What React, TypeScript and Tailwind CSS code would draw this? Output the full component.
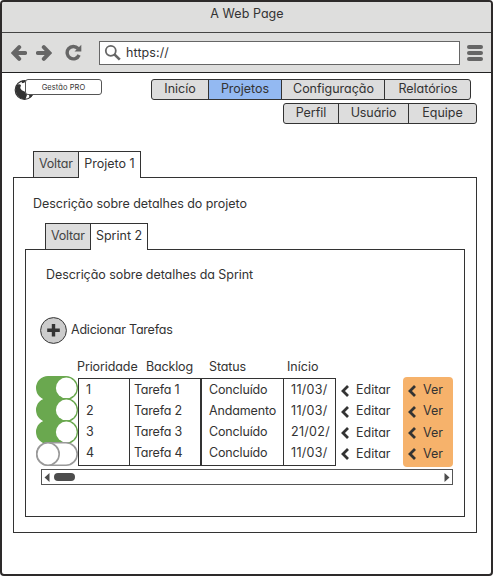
import React from 'react';

const tasks = [
  { id: 1, name: 'Tarefa 1', status: 'Concluído', start: '11/03/', on: true },
  { id: 2, name: 'Tarefa 2', status: 'Andamento', start: '11/03/', on: true },
  { id: 3, name: 'Tarefa 3', status: 'Concluído', start: '21/02/', on: true },
  { id: 4, name: 'Tarefa 4', status: 'Concluído', start: '11/03/', on: false },
];

function Arrow({ flip = false }: { flip?: boolean }) {
  return (
    <svg width="16" height="16" viewBox="0 0 16 16" className={flip ? 'rotate-180' : ''}>
      <path d="M8.2 2.2 2.6 8l5.6 5.8M3.5 8h10.6" fill="none" stroke="#666" strokeWidth="4" strokeLinecap="round" />
    </svg>
  );
}

function Chevron() {
  return (
    <svg width="8" height="12" viewBox="0 0 8 12" className="shrink-0">
      <path d="M7 1 2 6l5 5" fill="none" stroke="#333" strokeWidth="2.8" />
    </svg>
  );
}

function Toggle({ on }: { on: boolean }) {
  return (
    <svg width="42" height="24" viewBox="0 0 42 24" className="-mb-0.5 shrink-0">
      <rect x=".8" y=".8" width="40.4" height="22.4" rx="11.2" fill={on ? '#6aa84f' : '#fff'} stroke={on ? '#6aa84f' : '#999'} strokeWidth="1.6" />
      {on ? (
        <circle cx="30.3" cy="12" r="10.4" fill="#fff" />
      ) : (
        <circle cx="12" cy="12" r="11.2" fill="#fff" stroke="#999" strokeWidth="1.6" />
      )}
    </svg>
  );
}

function Tabs({ active, width }: { active: string; width: string }) {
  return (
    <div className="relative -mb-px flex h-[27px] leading-[24px]">
      <div className="w-[46px] border border-[#333] bg-[#ddd] pl-[5px] tracking-[-0.2px] text-[#444]">Voltar</div>
      <div className={`-ml-px border border-b-0 border-[#333] bg-white text-center ${width}`}>{active}</div>
    </div>
  );
}

export default function App() {
  return (
    <div className="h-[576px] w-[493px] bg-white font-['Inter','Liberation_Sans',sans-serif] text-[12.5px] text-[#333] [font-feature-settings:'cv11']">
      <div className="flex h-full flex-col overflow-hidden rounded-[4px] border-2 border-[#2d2a2a] bg-white">
        <header className="h-[31px] shrink-0 border-b border-[#444] bg-[#dededd] pl-px text-center leading-[24px] tracking-[0.05px]">A Web Page</header>
        <div className="flex h-10 shrink-0 items-center border-b border-[#222] bg-[#dededd] pl-[9px]">
          <Arrow />
          <div className="ml-[9px] flex"><Arrow flip /></div>
          <svg width="17" height="17" viewBox="0 0 17 17" className="ml-[13px]">
            <path d="M13 4.5A6.2 6.2 0 1 0 14.1 11" fill="none" stroke="#666" strokeWidth="3.4" />
            <path d="M16.3.8v6.8H9.5z" fill="#666" />
          </svg>
          <div className="ml-[17px] flex h-6 w-[361px] items-center border border-[#666] bg-white pl-[4px]">
            <svg width="18" height="18" viewBox="0 0 18 18">
              <circle cx="6.8" cy="6.8" r="5" fill="none" stroke="#666" strokeWidth="1.8" />
              <path d="m10.4 10.4 5.4 5.2" stroke="#666" strokeWidth="2.7" />
            </svg>
            <span className="ml-1 pt-[2px] tracking-[0.1px]">https://</span>
          </div>
          <div className="ml-[7px] flex flex-col gap-[2px]">
            <i className="h-1 w-4 rounded-full bg-[#666]" />
            <i className="h-1 w-4 rounded-full bg-[#666]" />
            <i className="h-1 w-4 rounded-full bg-[#666]" />
          </div>
        </div>

        <div className="flex shrink-0 justify-between pl-3 pr-[14px] pt-[6px]">
          <div className="flex h-[22px]">
            <svg width="22" height="22" viewBox="0 0 22 22">
              <circle cx="10.5" cy="11" r="9.3" fill="#fff" stroke="#333" strokeWidth="1.2" />
              <path d="M2.2 7C4 4.8 6 4.8 7 6.2L6.2 9l1.6 2.2L11.5 13l1.8 2-1.8 5.2C5 20.5 0 14.5 2.2 7zM8 1.5l4 .4-1.8 1.9-2.5.4z" fill="#333" />
              <path d="m15 15.6 2-1.6 2.5-.3c-.5 2.3-1.8 4.2-4 5.4z" fill="#333" />
            </svg>
            <div className="relative -ml-[11px] h-4 w-[77px] rounded-[3px] border border-[#555] bg-white pt-px text-center text-[7.5px] leading-[13px] tracking-[0.08px]">Gestão PRO</div>
          </div>
          <nav className="flex flex-col items-end gap-[3px] leading-[18px] tracking-[-0.02px]">
            <div className="mr-[6px] flex h-[21px] w-[320px] divide-x divide-[#333] overflow-hidden rounded-[3px] border border-[#333] bg-[#ddd] text-center">
              <span className="w-[57px]">Inicío</span>
              <span className="w-[73px] bg-[#93b9f2]">Projetos</span>
              <span className="w-[103px] pl-px">Configuração</span>
              <span className="flex-1 pl-px">Relatórios</span>
            </div>
            <div className="flex h-[21px] w-[194px] divide-x divide-[#333] overflow-hidden rounded-[3px] border border-[#333] bg-[#ddd] text-center">
              <span className="w-[55px]">Perfil</span>
              <span className="w-[70px] tracking-[-0.1px]">Usuário</span>
              <span className="flex-1">Equipe</span>
            </div>
          </nav>
        </div>

        <main className="ml-[11px] mt-[27px] w-[464px]">
          <div className="pl-5"><Tabs active="Projeto 1" width="w-[63px]" /></div>
          <section className="h-[356px] border border-[#333] pl-[11px]">
            <p className="ml-2 mt-[16px] h-5 leading-5 tracking-[-0.04px]">Descrição sobre detalhes do projeto</p>
            <div className="mt-[9px] pl-5"><Tabs active="Sprint 2" width="w-[58px]" /></div>
            <div className="h-[268px] w-[440px] border border-[#333] pl-[10px]">
              <p className="ml-[10px] mt-[15px] h-5 leading-5 tracking-[-0.06px]">Descrição sobre detalhes da Sprint</p>
              <div className="ml-1 mt-[32px] flex h-[27px] items-center">
                <svg width="27" height="27" viewBox="0 0 27 27">
                  <circle cx="13.5" cy="13.5" r="12.9" fill="#ccc" stroke="#333" strokeWidth="1" />
                  <path d="M13.5 7v12.6M7.2 13.3h12.6" stroke="#333" strokeWidth="3.4" />
                </svg>
                <span className="ml-1 tracking-[-0.22px]">Adicionar Tarefas</span>
              </div>
              <div className="ml-[41px] mt-[13px] flex h-[19px] leading-5">
                <span className="w-[69px] tracking-[-0.1px]">Prioridade</span>
                <span className="w-[63px] tracking-[-0.15px]">Backlog</span>
                <span className="w-[78px] tracking-[-0.1px]">Status</span>
                <span>Início</span>
              </div>
              <div className="flex h-[92px]">
                <div className="flex flex-col">
                  {tasks.map((t) => <Toggle key={t.id} on={t.on} />)}
                </div>
                <div className="mt-[2px] flex h-[88px] w-[258px] border border-[#333] leading-[21px]">
                  <div className="w-[51px] border-r border-[#333] pl-[7px]">{tasks.map((t) => <div key={t.id}>{t.id}</div>)}</div>
                  <div className="w-[72px] border-r-2 border-[#333] pl-1 tracking-[-0.22px]">{tasks.map((t) => <div key={t.id}>{t.name}</div>)}</div>
                  <div className="w-[82px] border-r border-[#333] pl-[7px] tracking-[-0.15px]">{tasks.map((t) => <div key={t.id}>{t.status}</div>)}</div>
                  <div className="pl-[7px] tracking-[0.3px]">{tasks.map((t) => <div key={t.id}>{t.start}</div>)}</div>
                </div>
                <div className="mt-[3px] w-[62px] pl-[5px] pt-px">
                  {tasks.map((t) => <div key={t.id} className="flex h-[21.2px] items-center gap-[7px]"><Chevron />Editar</div>)}
                </div>
                <div className="ml-[5px] mt-px h-[90px] w-[50px] rounded bg-[#f6b26b] pl-[5px] pt-[3px]">
                  {tasks.map((t) => <div key={t.id} className="flex h-[21.2px] items-center gap-[7px]"><Chevron />Ver</div>)}
                </div>
              </div>
              <div className="ml-[5px] mt-px flex h-4 w-[412px] items-center border border-[#555] px-[2px]">
                <svg width="6" height="9" viewBox="0 0 6 9"><path d="M5.5 0v9L.5 4.5z" fill="#4d4d4d" /></svg>
                <div className="ml-1 h-2 w-[21px] rounded-full bg-[#4d4d4d]" />
                <svg width="6" height="9" viewBox="0 0 6 9" className="ml-auto"><path d="M.5 0v9l5-4.5z" fill="#4d4d4d" /></svg>
              </div>
            </div>
          </section>
        </main>
      </div>
    </div>
  );
}
